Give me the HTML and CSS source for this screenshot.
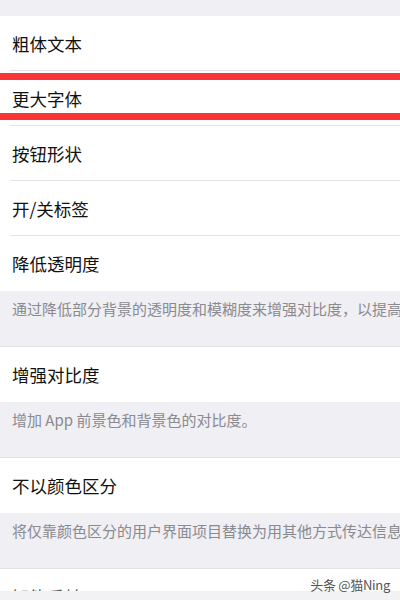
FILE: index.html
```html
<!DOCTYPE html>
<html lang="zh-CN">
<head>
<meta charset="utf-8">
<title>显示与文字大小</title>
<link rel="stylesheet" href="styles.css">
</head>
<body>
<div class="screen">
  <div class="top-gap"></div>
  <div class="group">
    <div class="row sep">粗体文本</div>
    <div class="row sep">更大字体</div>
    <div class="row sep">按钮形状</div>
    <div class="row sep">开/关标签</div>
    <div class="row">降低透明度</div>
  </div>
  <div class="footer">通过降低部分背景的透明度和模糊度来增强对比度，以提高易读性。</div>
  <div class="group">
    <div class="row">增强对比度</div>
  </div>
  <div class="footer">增加 App 前景色和背景色的对比度。</div>
  <div class="group">
    <div class="row">不以颜色区分</div>
  </div>
  <div class="footer">将仅靠颜色区分的用户界面项目替换为用其他方式传达信息的项目。</div>
  <div class="group last">
    <div class="row">智能反转</div>
  </div>
  <div class="bottom-strip"></div>

  <div class="mark mark-1"></div>
  <div class="mark mark-2"></div>
  <div class="watermark">头条 @猫Ning</div>
</div>
</body>
</html>
```
FILE: styles.css
```css
html, body {
  margin: 0;
  padding: 0;
}
body {
  background: #efeff4;
  font-family: "Noto Sans CJK SC", "Noto Sans", sans-serif;
}
.screen {
  position: relative;
  width: 400px;
  height: 600px;
  overflow: hidden;
  display: flex;
  flex-direction: column;
  background: #efeff4;
}
.top-gap {
  height: 16px;
  flex: none;
}
.group {
  background: #fff;
  flex: none;
  border-top: 1px solid #e2e2e6;
}
.top-gap + .group {
  border-top: none;
}
.row {
  position: relative;
  height: 55px;
  display: flex;
  align-items: center;
  padding-left: 12px;
  font-size: 17.5px;
  color: #111;
  white-space: nowrap;
}
.row.sep::after {
  content: "";
  position: absolute;
  left: 10px;
  right: 0;
  bottom: 0;
  height: 1px;
  background: #e4e4e8;
}
.footer {
  height: 55px;
  flex: none;
  box-sizing: border-box;
  padding: 7px 0 0 12px;
  font-size: 15px;
  line-height: 22px;
  color: #8a8a8f;
  white-space: nowrap;
  overflow: hidden;
}
.group.last {
  height: 22px;
  overflow: hidden;
}
.group.last .row {
  height: 55px;
  align-items: flex-start;
  padding-top: 15px;
  box-sizing: border-box;
  color: #555;
}
.bottom-strip {
  flex: 1;
  background: #f2f2f4;
}
.mark {
  position: absolute;
  left: 0;
  right: 0;
  height: 7px;
  background: #fb3438;
}
.mark-1 {
  top: 73px;
}
.mark-2 {
  top: 113px;
}
.watermark {
  position: absolute;
  right: 10px;
  top: 577px;
  font-size: 13px;
  line-height: 16px;
  color: #555;
  text-shadow: 0 0 2px #fff;
  letter-spacing: -0.3px;
}
```
